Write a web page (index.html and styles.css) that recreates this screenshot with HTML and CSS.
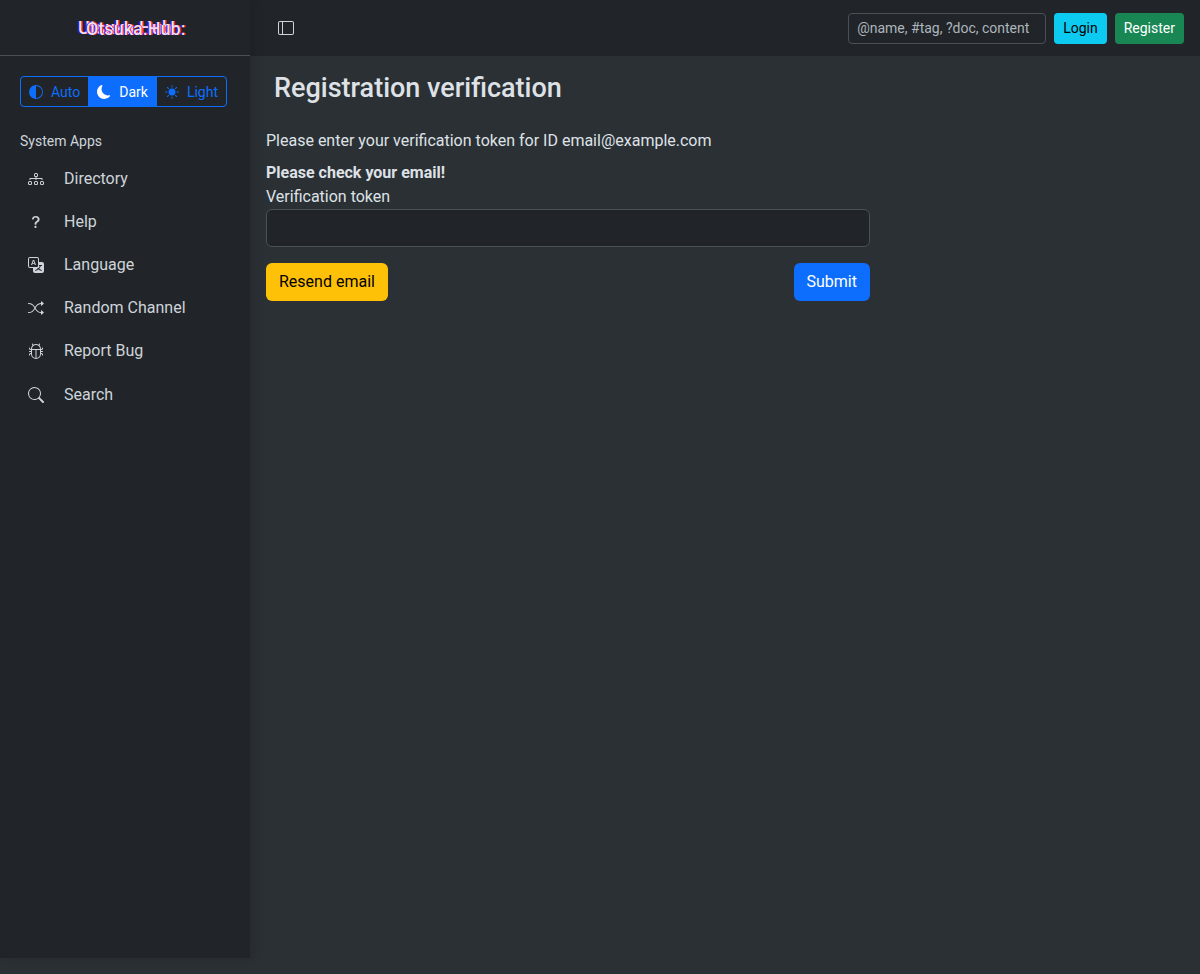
FILE: index.html
```html
<!DOCTYPE html>
<html lang="en">
<head>
  <meta charset="UTF-8">
  <title>Registration verification</title>
  <link rel="stylesheet" href="styles.css">
</head>
<body>
  <div id="app">
    <aside id="sidebar">
      <div id="brand">
        <span class="logo">Utsuka.Hub<span class="logoGhost">Otsuka.Hub:</span></span>
      </div>

      <div id="themeSwitch">
        <div class="themeBtn">
          <svg class="themeIcon" viewBox="0 0 16 16"><path d="M8 15A7 7 0 1 0 8 1v14zm0 1A8 8 0 1 1 8 0a8 8 0 0 1 0 16z"/></svg>
          Auto
        </div>
        <div class="themeBtn active">
          <svg class="themeIcon" viewBox="0 0 16 16"><path d="M6 .278a.768.768 0 0 1 .08.858 7.208 7.208 0 0 0-.878 3.46c0 4.021 3.278 7.277 7.318 7.277.527 0 1.04-.055 1.533-.16a.787.787 0 0 1 .81.316.733.733 0 0 1-.031.893A8.349 8.349 0 0 1 8.344 16C3.734 16 0 12.286 0 7.71 0 4.266 2.114 1.312 5.124.06A.752.752 0 0 1 6 .278z"/></svg>
          Dark
        </div>
        <div class="themeBtn">
          <svg class="themeIcon" viewBox="0 0 16 16"><path d="M8 12a4 4 0 1 0 0-8 4 4 0 0 0 0 8zM8 0a.5.5 0 0 1 .5.5v2a.5.5 0 0 1-1 0v-2A.5.5 0 0 1 8 0zm0 13a.5.5 0 0 1 .5.5v2a.5.5 0 0 1-1 0v-2A.5.5 0 0 1 8 13zm8-5a.5.5 0 0 1-.5.5h-2a.5.5 0 0 1 0-1h2a.5.5 0 0 1 .5.5zM3 8a.5.5 0 0 1-.5.5h-2a.5.5 0 0 1 0-1h2A.5.5 0 0 1 3 8zm10.657-5.657a.5.5 0 0 1 0 .707l-1.414 1.415a.5.5 0 1 1-.707-.708l1.414-1.414a.5.5 0 0 1 .707 0zm-9.193 9.193a.5.5 0 0 1 0 .707L3.05 13.657a.5.5 0 0 1-.707-.707l1.414-1.414a.5.5 0 0 1 .707 0zm9.193 2.121a.5.5 0 0 1-.707 0l-1.414-1.414a.5.5 0 0 1 .707-.707l1.414 1.414a.5.5 0 0 1 0 .707zM4.464 4.465a.5.5 0 0 1-.707 0L2.343 3.05a.5.5 0 1 1 .707-.707l1.414 1.414a.5.5 0 0 1 0 .708z"/></svg>
          Light
        </div>
      </div>

      <div id="navTitle">System Apps</div>
      <nav id="navList">
        <a class="navItem">
          <svg class="navIcon" viewBox="0 0 16 16"><path fill-rule="evenodd" d="M6 3.5A1.5 1.5 0 0 1 7.5 2h1A1.5 1.5 0 0 1 10 3.5v1A1.5 1.5 0 0 1 8.5 6v1H14a.5.5 0 0 1 .5.5v1a.5.5 0 0 1-1 0V8h-5v.5a.5.5 0 0 1-1 0V8h-5v.5a.5.5 0 0 1-1 0v-1A.5.5 0 0 1 2 7h5.5V6A1.5 1.5 0 0 1 6 4.5v-1zM8.5 5a.5.5 0 0 0 .5-.5v-1a.5.5 0 0 0-.5-.5h-1a.5.5 0 0 0-.5.5v1a.5.5 0 0 0 .5.5h1zM0 11.5A1.5 1.5 0 0 1 1.5 10h1A1.5 1.5 0 0 1 4 11.5v1A1.5 1.5 0 0 1 2.5 14h-1A1.5 1.5 0 0 1 0 12.5v-1zm1.5-.5a.5.5 0 0 0-.5.5v1a.5.5 0 0 0 .5.5h1a.5.5 0 0 0 .5-.5v-1a.5.5 0 0 0-.5-.5h-1zm4.5.5A1.5 1.5 0 0 1 7.5 10h1a1.5 1.5 0 0 1 1.5 1.5v1A1.5 1.5 0 0 1 8.5 14h-1A1.5 1.5 0 0 1 6 12.5v-1zm1.5-.5a.5.5 0 0 0-.5.5v1a.5.5 0 0 0 .5.5h1a.5.5 0 0 0 .5-.5v-1a.5.5 0 0 0-.5-.5h-1zm4.5.5a1.5 1.5 0 0 1 1.5-1.5h1a1.5 1.5 0 0 1 1.5 1.5v1a1.5 1.5 0 0 1-1.5 1.5h-1a1.5 1.5 0 0 1-1.5-1.5v-1zm1.5-.5a.5.5 0 0 0-.5.5v1a.5.5 0 0 0 .5.5h1a.5.5 0 0 0 .5-.5v-1a.5.5 0 0 0-.5-.5h-1z"/></svg>
          Directory
        </a>
        <a class="navItem">
          <svg class="navIcon" viewBox="0 0 16 16"><path fill-rule="evenodd" d="M4.475 5.458c-.284 0-.514-.237-.47-.517C4.28 3.24 5.576 2 7.825 2c2.25 0 3.767 1.36 3.767 3.215 0 1.344-.665 2.288-1.79 2.973-1.1.659-1.414 1.118-1.414 2.01v.03a.5.5 0 0 1-.5.5h-.77a.5.5 0 0 1-.5-.495l-.003-.2c-.043-1.221.477-2.001 1.645-2.712 1.03-.632 1.397-1.135 1.397-2.028 0-.979-.758-1.698-1.926-1.698-1.009 0-1.71.529-1.938 1.402-.066.254-.278.461-.54.461h-.777ZM7.496 14c.622 0 1.095-.474 1.095-1.09 0-.618-.473-1.092-1.095-1.092-.606 0-1.087.474-1.087 1.091S6.89 14 7.496 14Z"/></svg>
          Help
        </a>
        <a class="navItem">
          <svg class="navIcon" viewBox="0 0 16 16"><path d="M4.545 6.714 4.11 8H3l1.862-5h1.284L8 8H6.833l-.435-1.286H4.545zm1.634-.736L5.5 3.956h-.049l-.679 2.022H6.18z"/><path d="M0 2a2 2 0 0 1 2-2h7a2 2 0 0 1 2 2v3h3a2 2 0 0 1 2 2v7a2 2 0 0 1-2 2H7a2 2 0 0 1-2-2v-3H2a2 2 0 0 1-2-2V2zm2-1a1 1 0 0 0-1 1v7a1 1 0 0 0 1 1h7a1 1 0 0 0 1-1V2a1 1 0 0 0-1-1H2zm7.138 9.995c.193.301.402.583.63.846-.748.575-1.673 1.001-2.768 1.292.178.217.451.635.555.867 1.125-.359 2.08-.844 2.886-1.494.777.665 1.739 1.165 2.93 1.472.133-.254.414-.673.629-.89-1.125-.253-2.057-.694-2.82-1.284.681-.747 1.222-1.651 1.621-2.757H14V8h-3v1.047h.765c-.318.844-.74 1.546-1.272 2.13a6.066 6.066 0 0 1-.415-.492 1.988 1.988 0 0 1-.94.31z"/></svg>
          Language
        </a>
        <a class="navItem">
          <svg class="navIcon" viewBox="0 0 16 16"><path fill-rule="evenodd" d="M0 3.5A.5.5 0 0 1 .5 3H1c2.202 0 3.827 1.24 4.874 2.418.49.552.865 1.102 1.126 1.532.26-.43.636-.98 1.126-1.532C9.173 4.24 10.798 3 13 3v1c-1.798 0-3.173 1.01-4.126 2.082A9.624 9.624 0 0 0 7.556 8a9.624 9.624 0 0 0 1.317 1.918C9.828 10.99 11.204 12 13 12v1c-2.202 0-3.827-1.24-4.874-2.418A10.595 10.595 0 0 1 7 9.05c-.26.43-.636.98-1.126 1.532C4.827 11.76 3.202 13 1 13H.5a.5.5 0 0 1 0-1H1c1.798 0 3.173-1.01 4.126-2.082A9.624 9.624 0 0 0 6.444 8a9.624 9.624 0 0 0-1.317-1.918C4.172 5.01 2.796 4 1 4H.5a.5.5 0 0 1-.5-.5z"/><path d="M13 5.466V1.534a.25.25 0 0 1 .41-.192l2.36 1.966c.12.1.12.284 0 .384l-2.36 1.966a.25.25 0 0 1-.41-.192zm0 9v-3.932a.25.25 0 0 1 .41-.192l2.36 1.966c.12.1.12.284 0 .384l-2.36 1.966a.25.25 0 0 1-.41-.192z"/></svg>
          Random Channel
        </a>
        <a class="navItem">
          <svg class="navIcon" viewBox="0 0 16 16"><path d="M4.355.522a.5.5 0 0 1 .623.333l.291.956A4.979 4.979 0 0 1 8 1c1.007 0 1.946.298 2.731.811l.29-.956a.5.5 0 1 1 .957.29l-.41 1.352A4.985 4.985 0 0 1 13 6h.5a.5.5 0 0 0 .5-.5V5a.5.5 0 0 1 1 0v.5A1.5 1.5 0 0 1 13.5 7H13v1h1.5a.5.5 0 0 1 0 1H13v1h.5a1.5 1.5 0 0 1 1.5 1.5v.5a.5.5 0 1 1-1 0v-.5a.5.5 0 0 0-.5-.5H13a5 5 0 0 1-10 0h-.5a.5.5 0 0 0-.5.5v.5a.5.5 0 1 1-1 0v-.5A1.5 1.5 0 0 1 2.5 10H3V9H1.5a.5.5 0 0 1 0-1H3V7h-.5A1.5 1.5 0 0 1 1 5.5V5a.5.5 0 0 1 1 0v.5a.5.5 0 0 0 .5.5H3c0-1.364.547-2.601 1.432-3.503l-.41-1.352a.5.5 0 0 1 .333-.623zM4 7v4a4 4 0 0 0 3.5 3.97V7H4zm4.5 0v7.97A4 4 0 0 0 12 11V7H8.5zM12 6a3.989 3.989 0 0 0-1.334-2.982A3.983 3.983 0 0 0 8 2a3.983 3.983 0 0 0-2.667 1.018A3.989 3.989 0 0 0 4 6h8z"/></svg>
          Report Bug
        </a>
        <a class="navItem">
          <svg class="navIcon" viewBox="0 0 16 16"><path d="M11.742 10.344a6.5 6.5 0 1 0-1.397 1.398h-.001c.03.04.062.078.098.115l3.85 3.85a1 1 0 0 0 1.415-1.414l-3.85-3.85a1.007 1.007 0 0 0-.115-.1zM12 6.5a5.5 5.5 0 1 1-11 0 5.5 5.5 0 0 1 11 0z"/></svg>
          Search
        </a>
      </nav>
    </aside>

    <div id="page">
      <header id="topBar">
        <svg id="sidebarToggle" viewBox="0 0 16 16"><path d="M0 3a2 2 0 0 1 2-2h12a2 2 0 0 1 2 2v10a2 2 0 0 1-2 2H2a2 2 0 0 1-2-2V3zm5-1v12h9a1 1 0 0 0 1-1V3a1 1 0 0 0-1-1H5zM4 2H2a1 1 0 0 0-1 1v10a1 1 0 0 0 1 1h2V2z"/></svg>
        <div id="topActions">
          <input id="topSearch" type="text" placeholder="@name, #tag, ?doc, content">
          <button class="btn btnSmall btnLogin">Login</button>
          <button class="btn btnSmall btnRegister">Register</button>
        </div>
      </header>

      <main id="content">
        <h1 id="pageTitle">Registration verification</h1>
        <div id="verifyForm">
          <p id="intro">Please enter your verification token for ID email@example.com</p>
          <div id="notice">Please check your email!</div>
          <label id="tokenLabel" for="token">Verification token</label>
          <input id="token" type="text">
          <div id="formActions">
            <button class="btn btnResend">Resend email</button>
            <button class="btn btnSubmit">Submit</button>
          </div>
        </div>
      </main>
    </div>
  </div>
</body>
</html>
```

FILE: styles.css
```css
* {
  box-sizing: border-box;
}
body {
  margin: 0;
  background-color: #2b3035;
  color: #dee2e6;
  font-family: Roboto, "Liberation Sans", sans-serif;
  font-size: 16px;
  line-height: 24px;
}
svg {
  fill: currentColor;
  flex-shrink: 0;
}
#app {
  display: flex;
  min-height: 974px;
  align-items: flex-start;
}

/* sidebar */
#sidebar {
  width: 250px;
  height: 958px;
  flex-shrink: 0;
  background-color: #212529;
  box-shadow: 4px 0 10px rgba(0, 0, 0, 0.12);
  position: relative;
  z-index: 1;
}
#brand {
  height: 56px;
  border-bottom: 1px solid #495057;
  display: flex;
  justify-content: center;
  padding-top: 16px;
}
.logo {
  position: relative;
  height: 24px;
  color: #f7dcea;
  font-size: 18px;
  font-weight: 500;
  text-shadow: -1px 0 #1a1aff, 1px 0 #ff1a1a;
}
.logoGhost {
  position: absolute;
  left: 8px;
  top: 1px;
  white-space: nowrap;
}
#themeSwitch {
  display: flex;
  width: 207px;
  height: 31px;
  margin: 20px 0 0 20px;
  border: 1px solid #0d6efd;
  border-radius: 4px;
  overflow: hidden;
  color: #0d6efd;
  font-size: 14px;
}
.themeBtn {
  flex: 1 1 auto;
  display: flex;
  align-items: center;
  justify-content: center;
  gap: 8px;
  border-left: 1px solid #0d6efd;
}
.themeBtn:first-child {
  border-left: 0;
}
.themeBtn.active {
  background-color: #0d6efd;
  color: #fff;
}
.themeIcon {
  width: 14px;
  height: 14px;
}
#navTitle {
  margin: 24px 0 0 20px;
  color: #ced4da;
  font-size: 14px;
  line-height: 21px;
}
#navList {
  display: flex;
  flex-direction: column;
  margin-top: 5px;
}
.navItem {
  display: flex;
  align-items: center;
  gap: 20px;
  height: 43.2px;
  padding-left: 28px;
  color: #ced4da;
}
.navIcon {
  width: 16px;
  height: 16px;
}

/* top bar */
#page {
  flex: 1;
}
#topBar {
  height: 56px;
  background-color: #212529;
  display: flex;
  align-items: center;
  justify-content: space-between;
  padding: 0 16px 0 28px;
}
#sidebarToggle {
  width: 16px;
  height: 16px;
  color: #ced4da;
}
#topActions {
  display: flex;
  gap: 8px;
}
#topSearch {
  width: 198px;
  height: 31px;
  padding: 4px 8px;
  background-color: #212529;
  border: 1px solid #495057;
  border-radius: 4px;
  color: #dee2e6;
  font-family: inherit;
  font-size: 14px;
}
#topSearch::placeholder {
  color: #adb5bd;
  opacity: 1;
}
.btn {
  height: 38px;
  padding: 6px 12px;
  border: 1px solid transparent;
  border-radius: 6px;
  font-family: inherit;
  font-size: 16px;
  line-height: 24px;
}
.btnSmall {
  height: 31px;
  padding: 4px 8px;
  border-radius: 4px;
  font-size: 14px;
  line-height: 21px;
}
.btnLogin {
  background-color: #0dcaf0;
  color: #000;
}
.btnRegister {
  background-color: #198754;
  color: #fff;
}
.btnResend {
  background-color: #ffc107;
  color: #000;
}
.btnSubmit {
  background-color: #0d6efd;
  color: #fff;
}

/* main content */
#content {
  padding: 16px 16px 0;
}
#pageTitle {
  margin: 0 0 0 8px;
  color: #dee2e6;
  font-size: 27px;
  font-weight: 500;
  line-height: 32px;
}
#verifyForm {
  width: 604px;
  margin-top: 25px;
}
#intro {
  margin: 0 0 8px;
}
#notice {
  font-weight: 700;
}
#tokenLabel {
  display: block;
}
#token {
  display: block;
  width: 100%;
  height: 38px;
  background-color: #212529;
  border: 1px solid #495057;
  border-radius: 6px;
}
#formActions {
  display: flex;
  justify-content: space-between;
  margin-top: 16px;
}
```
